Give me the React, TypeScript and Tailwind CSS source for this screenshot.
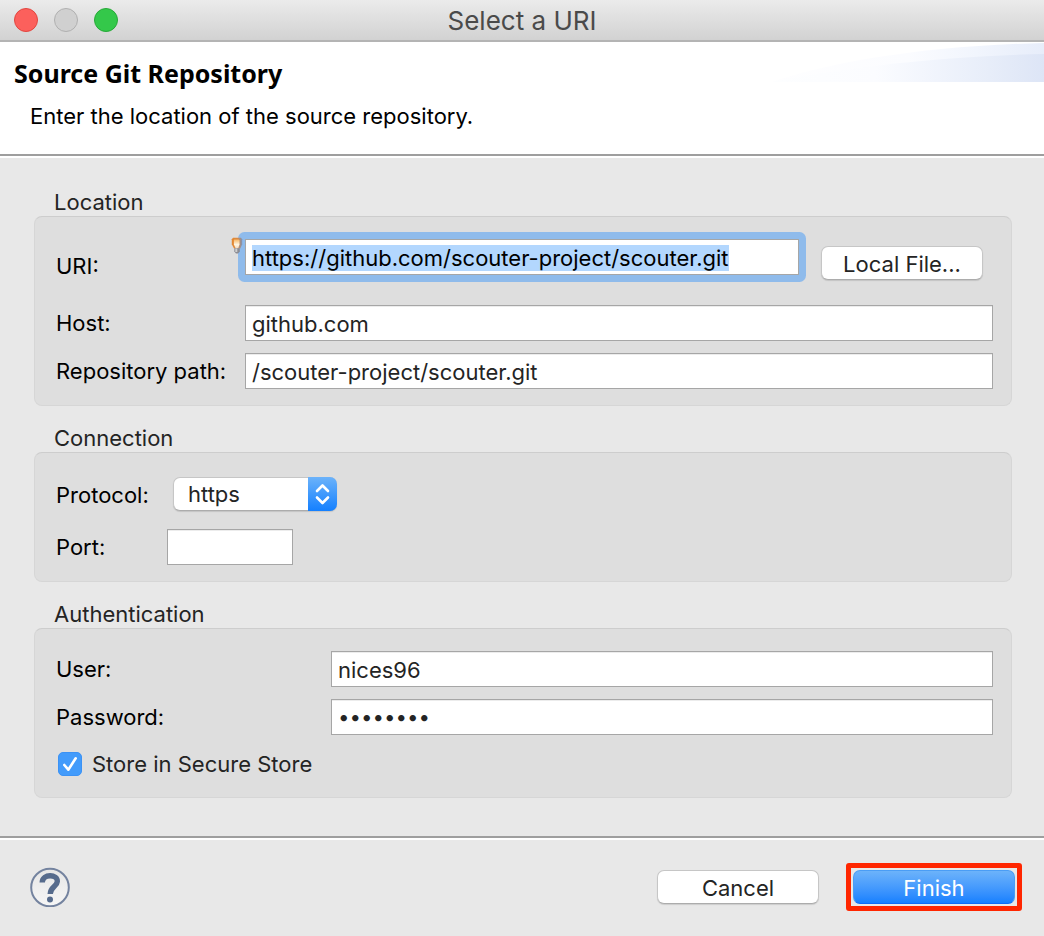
import { useEffect, useRef, useState } from "react";
import type { ReactNode } from "react";

const fieldBase =
  "h-9 min-w-0 border border-[#a6a6a6] bg-white px-[6px] pt-[2px] shadow-[inset_0_1px_0_#ececec] outline-none";
const field = `${fieldBase} text-[22px] leading-7 text-[#242424]`;
const label = "text-[22px] leading-7 text-black";
const pushButton =
  "h-[34px] w-[162px] shrink-0 rounded-[7px] border pt-[2px] text-[22px] leading-7";
const whiteControl =
  "border-[#c6c6c6] border-b-[#acacac] bg-white text-[#242424] shadow-[0_1px_1px_rgba(0,0,0,0.12)]";

function Group({ title, className, children }: { title: string; className: string; children: ReactNode }) {
  return (
    <section>
      <h2 className="pl-5 text-[22px] leading-7 text-[#242424]">{title}</h2>
      <div className={`rounded-lg border border-[#d6d6d6] border-t-[#cdcdcd] bg-[#dedede] pr-[18px] pb-4 pl-[21px] ${className}`}>
        {children}
      </div>
    </section>
  );
}

function HintBulb() {
  return (
    <svg className="absolute -top-[2px] -left-[14px] h-[18px] w-3" viewBox="0 0 12 18" aria-hidden="true">
      <defs>
        <linearGradient id="bulb" x1="0" x2="1" y1="0" y2="0">
          <stop offset="0" stopColor="#e5882f" />
          <stop offset="0.55" stopColor="#d98a45" />
          <stop offset="1" stopColor="#7f93b5" />
        </linearGradient>
        <linearGradient id="glow" x1="0" x2="0" y1="0" y2="1">
          <stop offset="0" stopColor="#f7b766" />
          <stop offset="0.6" stopColor="#fff6e2" />
          <stop offset="1" stopColor="#f3dcc0" />
        </linearGradient>
      </defs>
      <path d="M2 .8h8l1.200 1.400v5l-1.900 4.200H3L.8 7.200v-5z" fill="url(#bulb)" />
      <path d="M3.200 2.500h4.600l.7 1v4L7.300 11H4.500L2.900 7.500v-4z" fill="url(#glow)" />
      <path d="M3.300 11.200h5.500v3.300l-1.800 2H5l-1.700-2z" fill="#8b8c93" />
      <path d="M4.300 11.500h2v3.500h-2z" fill="#cfcfcf" />
    </svg>
  );
}

export default function App() {
  const uriRef = useRef<HTMLInputElement>(null);
  const [uri, setUri] = useState("https://github.com/scouter-project/scouter.git");
  const [stored, setStored] = useState(true);

  useEffect(() => {
    uriRef.current?.focus();
    uriRef.current?.select();
  }, []);

  return (
    <div className="flex min-h-screen flex-col bg-[#e8e8e8] font-[Inter,sans-serif]">
      <header className="relative flex h-[42px] items-center justify-center border-b-2 border-[#b4b4b4] bg-linear-to-b from-[#ebebeb] to-[#d2d2d2]">
        <div className="absolute left-[14px] flex gap-4">
          <button aria-label="Close" className="size-6 rounded-full border border-[#e2463f] bg-[#fc605c]" />
          <button aria-label="Minimize" disabled className="size-6 rounded-full border border-[#b0b0b0] bg-[#d0d0d0]" />
          <button aria-label="Zoom" className="size-6 rounded-full border border-[#27a938] bg-[#34c84a]" />
        </div>
        <span className="pt-[2px] text-[26px] leading-8 text-[#4a4a4a]">Select a URI</span>
      </header>

      <div className="relative border-b-2 border-[#9e9e9e] bg-white pt-[15px] pb-6 pl-[14px]">
        <svg className="absolute top-0 right-0 h-10 w-[272px]" viewBox="0 0 272 40" preserveAspectRatio="none" aria-hidden="true">
          <defs>
            <linearGradient id="sweep" x1="0" x2="1" y1="0" y2="0">
              <stop offset="0" stopColor="#fdfeff" />
              <stop offset="0.38" stopColor="#fbfcff" />
              <stop offset="0.55" stopColor="#f3f6fd" />
              <stop offset="0.8" stopColor="#e7edf9" />
              <stop offset="1" stopColor="#dde5f6" />
            </linearGradient>
            <linearGradient id="sweep-top" x1="0" x2="1" y1="0" y2="0">
              <stop offset="0" stopColor="#fefeff" />
              <stop offset="0.5" stopColor="#fbfcff" />
              <stop offset="0.75" stopColor="#f1f5fd" />
              <stop offset="1" stopColor="#e7edfa" />
            </linearGradient>
          </defs>
          <path d="M0 40C60 20 150 4 272 1V40z" fill="url(#sweep-top)" />
          <path d="M0 40C80 24 180 14 272 12V40z" fill="url(#sweep)" />
        </svg>
        <h1 className="font-['Noto_Sans',sans-serif] text-[25px] leading-8 font-bold text-black">Source Git Repository</h1>
        <p className="mt-[13px] pl-4 text-[22px] leading-7 text-black">Enter the location of the source repository.</p>
      </div>

      <main className="flex flex-col gap-[18px] border-t-2 border-white pt-[30px] pr-8 pb-[38px] pl-[34px]">
        <Group title="Location" className="pt-[22px]">
          <div className="grid grid-cols-[189px_1fr] items-center gap-y-3">
            <label htmlFor="uri" className={label}>URI:</label>
            <div className="flex h-[54px] items-start gap-[22px] pr-[10px]">
              <div className="relative flex min-w-0 flex-1 rounded-[2px] focus-within:ring-[7px] focus-within:ring-[#8fbbeb]">
                <input
                  id="uri"
                  ref={uriRef}
                  value={uri}
                  onChange={(e) => setUri(e.target.value)}
                  className="h-9 w-full min-w-0 border border-[#a6a6a6] bg-white px-[6px] pt-[2px] text-[22px] leading-7 text-black caret-transparent outline-none selection:bg-[#b3d7fe] selection:text-black"
                />
                <HintBulb />
              </div>
              <button className={`mt-[7px] ${pushButton} ${whiteControl}`}>Local File...</button>
            </div>
            <label htmlFor="host" className={label}>Host:</label>
            <input id="host" defaultValue="github.com" className={field} />
            <label htmlFor="path" className={label}>Repository path:</label>
            <input id="path" defaultValue="/scouter-project/scouter.git" className={field} />
          </div>
        </Group>

        <Group title="Connection" className="pt-6">
          <div className="grid grid-cols-[111px_1fr] items-center gap-y-4">
            <label htmlFor="protocol" className={label}>Protocol:</label>
            <div className="h-9 pl-[6px]">
              <div className="relative h-[34px] w-[164px]">
                <select id="protocol" className={`size-full appearance-none rounded-[7px] border pl-[14px] text-[22px] leading-7 outline-none ${whiteControl}`}>
                  <option>https</option>
                </select>
                <svg className="pointer-events-none absolute top-0 right-0 h-[34px] w-[29px]" viewBox="0 0 29 34" aria-hidden="true">
                  <defs>
                    <linearGradient id="cap" x1="0" x2="0" y1="0" y2="1">
                      <stop offset="0" stopColor="#6cb3fa" />
                      <stop offset="1" stopColor="#1480ff" />
                    </linearGradient>
                  </defs>
                  <path d="M0 0h22a7 7 0 0 1 7 7v20a7 7 0 0 1-7 7H0z" fill="url(#cap)" />
                  <path d="M9 14l5.500-5.500 5.500 5.500M9 20.500l5.500 5.500 5.500-5.500" fill="none" stroke="#fff" strokeWidth="2.600" strokeLinecap="round" strokeLinejoin="round" />
                </svg>
              </div>
            </div>
            <label htmlFor="port" className={label}>Port:</label>
            <input id="port" className={`w-[126px] ${field}`} />
          </div>
        </Group>

        <Group title="Authentication" className="pt-[22px]">
          <div className="grid grid-cols-[275px_1fr] items-center gap-y-3">
            <label htmlFor="user" className={label}>User:</label>
            <input id="user" defaultValue="nices96" className={field} />
            <label htmlFor="password" className={label}>Password:</label>
            <input
              id="password"
              type="password"
              defaultValue="scouter1"
              className={`${fieldBase} font-['DejaVu_Sans',sans-serif] text-[18px] leading-7 font-bold text-[#242424]`}
            />
            <label className="col-span-2 flex h-[34px] items-center gap-[10px] pl-[2px] text-[22px] leading-7 text-[#242424]">
              <span className="relative flex size-6">
                <input
                  type="checkbox"
                  checked={stored}
                  onChange={(e) => setStored(e.target.checked)}
                  className="peer size-6 appearance-none rounded-[5px] border border-[#a6a6a6] bg-white checked:border-[#3b92f5] checked:bg-[#429bfb]"
                />
                <svg className="pointer-events-none absolute inset-0 hidden size-6 peer-checked:block" viewBox="0 0 24 24" aria-hidden="true">
                  <path d="M6.300 13l4 4.700L17.700 6.300" fill="none" stroke="#fff" strokeWidth="2.600" strokeLinecap="round" strokeLinejoin="round" />
                </svg>
              </span>
              Store in Secure Store
            </label>
          </div>
        </Group>
      </main>

      <div className="border-t-2 border-[#9e9e9e]">
        <footer className="flex items-center border-t-2 border-white pt-[23px] pr-[22px] pb-[25px] pl-[30px]">
          <button aria-label="Help" className="size-10">
            <svg className="size-10" viewBox="0 0 40 40" aria-hidden="true">
              <defs>
                <linearGradient id="help" x1="0" x2="0" y1="0" y2="1">
                  <stop offset="0" stopColor="#e6e6e6" />
                  <stop offset="1" stopColor="#f6f6f6" />
                </linearGradient>
              </defs>
              <circle cx="20" cy="20.500" r="18.800" fill="url(#help)" stroke="#74839f" strokeWidth="2" />
              <path d="M12.200 15.500C12.500 6.500 27.800 6.800 27.300 14.500C27 19.500 20.300 20 20.200 27" fill="none" stroke="#566b8c" strokeWidth="5.400" />
              <circle cx="20" cy="32.500" r="3" fill="#566b8c" />
            </svg>
          </button>
          <button className={`mr-[27px] ml-auto ${pushButton} ${whiteControl}`}>Cancel</button>
          <div className="flex rounded-[3px] border-[5px] border-[#ff2600] p-[2px]">
            <button className={`${pushButton} border-[#4a9df5] border-b-[#0f6bf5] bg-linear-to-b from-[#6cb3fa] to-[#1480ff] text-white`}>Finish</button>
          </div>
        </footer>
      </div>
    </div>
  );
}
